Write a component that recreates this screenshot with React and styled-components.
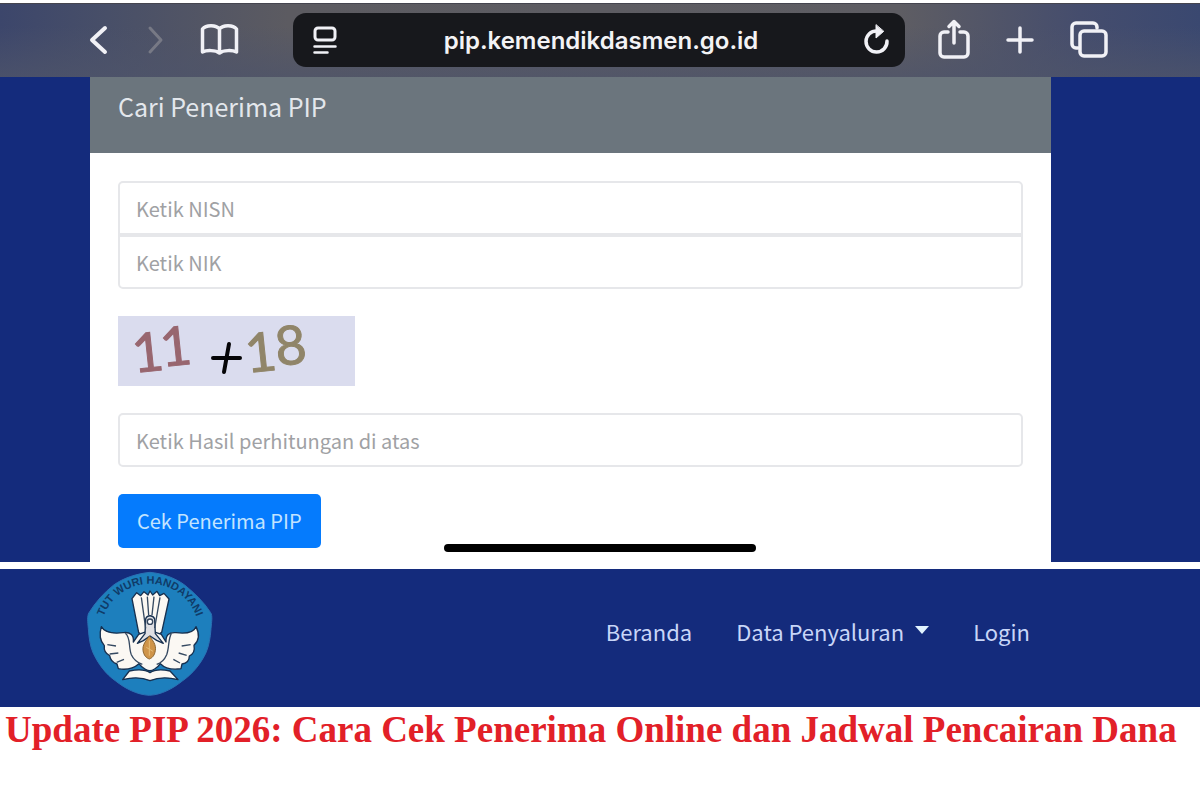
import React from "react";
import styled, { createGlobalStyle, css } from "styled-components";

const blue = "#142b7c";
const sans = `"Noto Sans CJK SC", "Noto Sans", sans-serif`;

const GlobalStyle = createGlobalStyle`
  * {
    box-sizing: border-box;
  }

  body {
    margin: 0;
    background: #fff;
    font-family: ${sans};
  }
`;

const Page = styled.main`
  display: flex;
  flex-direction: column;
  padding-top: 3px;
`;

const Toolbar = styled.header`
  display: flex;
  align-items: center;
  padding: 9px 0 10px;
  border-top: 1px solid #45454f;
  background:
    linear-gradient(180deg, rgba(78, 84, 106, 0) 30%, rgba(78, 84, 106, 0.75) 100%),
    linear-gradient(90deg, #3c466b 0%, #484f68 9%, #5c5b61 24%, #5e5d63 75%, #454d6d 90%, #3a4870 100%);
`;

const ToolGroup = styled.div`
  display: flex;
  align-items: center;
  gap: ${(props) => (props.$end ? "34px" : "36px")};
  padding: ${(props) => (props.$end ? "0 91px 0 32px" : "0 53px 0 88px")};
`;

const IconButton = styled.button`
  display: flex;
  padding: 0;
  border: 0;
  background: none;
  color: #f1f1f6;

  &:disabled {
    color: #777985;
  }
`;

const AddressBar = styled.div`
  flex: 1;
  display: flex;
  align-items: center;
  gap: 16px;
  height: 54px;
  padding: 0 14px 0 18px;
  border-radius: 13px;
  background: #17181c;
`;

const Address = styled.input`
  flex: 1;
  min-width: 0;
  padding: 2px 0 0;
  border: 0;
  background: none;
  color: #f3f3f5;
  font-family: Inter, sans-serif;
  font-size: 24px;
  font-weight: 600;
  line-height: 32px;
  text-align: center;
`;

const Content = styled.section`
  position: relative;
  padding: 0 12.4% 0 7.5%;
  background: ${blue};
`;

const Card = styled.div`
  background: #fff;
`;

const CardHeader = styled.div`
  padding: 13px 28px 31px;
  background: #6b757d;
`;

const CardTitle = styled.h1`
  margin: 0;
  color: #e3e7ec;
  font-size: 25px;
  font-weight: 400;
  line-height: 32px;
`;

const Form = styled.form`
  display: flex;
  flex-direction: column;
  align-items: flex-start;
  gap: 27px;
  padding: 28px 28px 14px;
`;

const FieldGroup = styled.div`
  width: 100%;
`;

const Field = styled.input`
  display: block;
  width: 100%;
  height: 54px;
  padding: 0 16px;
  border: 2px solid #e6e7ea;
  border-radius: ${(props) => props.$radius || "5px"};
  background: #fff;
  color: #495057;
  font-family: ${sans};
  font-size: 20px;
  line-height: 32px;

  &::placeholder {
    color: #a0a1a4;
    opacity: 1;
  }
`;

const Captcha = styled.svg`
  display: block;
  width: 237px;
  height: 70px;
  overflow: visible;
  background: #dadcee;
  font-family: Lato, sans-serif;
  font-size: 54px;
`;

const Submit = styled.button`
  height: 54px;
  padding: 0 19px;
  border: 0;
  border-radius: 5px;
  background: #057bfd;
  color: #c3e4ff;
  font-family: ${sans};
  font-size: 20px;
  line-height: 32px;
`;

const HomeIndicator = styled.div`
  position: absolute;
  bottom: 10px;
  left: 37%;
  width: 26%;
  height: 8px;
  border-radius: 4px;
  background: #000;
`;

const Navbar = styled.nav`
  display: flex;
  align-items: flex-start;
  justify-content: space-between;
  margin-top: 7px;
  padding: 2px 170px 10px 87px;
  background: ${blue};
`;

const NavLinks = styled.ul`
  display: flex;
  gap: 44px;
  margin: 0;
  padding: 44px 0 0;
  list-style: none;
`;

const NavLink = styled.a`
  display: flex;
  align-items: center;
  gap: 11px;
  color: #c8d6f8;
  font-size: 22px;
  line-height: 32px;
  text-decoration: none;

  ${(props) =>
    props.$dropdown &&
    css`
      &::after {
        content: "";
        margin-bottom: 2px;
        border-top: 8px solid #e2f4ff;
        border-right: 7px solid transparent;
        border-left: 7px solid transparent;
      }
    `}
`;

const Headline = styled.h2`
  margin: 0;
  padding: 2px 5px;
  color: #e22028;
  font-family: "Liberation Serif", serif;
  font-size: 37px;
  font-weight: 700;
  line-height: 42px;
`;

const Icon = ({ width, height, stroke = 3, children }) => (
  <svg
    width={width}
    height={height}
    viewBox={`0 0 ${width} ${height}`}
    fill="none"
    stroke="currentColor"
    strokeWidth={stroke}
    strokeLinecap="round"
    strokeLinejoin="round"
    aria-hidden="true"
  >
    {children}
  </svg>
);

const BackIcon = () => (
  <Icon width={20} height={40} stroke={4}>
    <path d="M17 8 4 20l13 12" />
  </Icon>
);

const ForwardIcon = () => (
  <Icon width={20} height={40} stroke={3}>
    <path d="M6 8 17 20 6 32" />
  </Icon>
);

const BookIcon = () => (
  <Icon width={40} height={40} stroke={3.5}>
    <path d="M19.500 32V9C16 4.500 6 4.500 2.500 9v23c4-2 13-2 17 1 4-3 13-3 17-1V9C33 4.500 23 4.500 19.500 9" />
  </Icon>
);

const ReaderIcon = () => (
  <Icon width={28} height={40}>
    <rect x="4" y="8" width="20" height="12" rx="3" />
    <path d="M3.500 26.500h21M3.500 32.500h13" strokeWidth="2.500" />
  </Icon>
);

const ReloadIcon = () => (
  <Icon width={28} height={40} stroke={3.5}>
    <path d="M24 21A10.500 10.500 0 1 1 14 11" />
    <path d="M13 5v13l7.500-6.500z" fill="currentColor" strokeWidth="1" />
  </Icon>
);

const ShareIcon = () => (
  <Icon width={34} height={44} stroke={3.5}>
    <path d="M11 14H7a4 4 0 0 0-4 4v17a4 4 0 0 0 4 4h20a4 4 0 0 0 4-4V18a4 4 0 0 0-4-4h-4" />
    <path d="M17 25V4M12 8.500 17 3.500l5 5" />
  </Icon>
);

const PlusIcon = () => (
  <Icon width={30} height={40} stroke={3.5}>
    <path d="M3 20h24M15 8v24" />
  </Icon>
);

const TabsIcon = () => (
  <Icon width={40} height={42} stroke={3.5}>
    <path d="M9 29H7a4 4 0 0 1-4-4V8a4 4 0 0 1 4-4h17a4 4 0 0 1 4 4v1" />
    <rect x="11" y="12" width="26" height="25" rx="4" />
  </Icon>
);

const Logo = () => (
  <svg width="126" height="126" viewBox="51 33 378 378" role="img" aria-label="Tut Wuri Handayani">
    <path
      d="M240 37c40 4 75 17 104 38 30 25 58 51 78 83 6 10 3 26 1 48-2 28-6 50-15 72-16 34-40 63-71 85-29 23-62 41-99 43-37-2-72-20-101-43-31-22-52-51-68-85-9-22-12-44-14-72-2-22-4-38 2-48 20-32 44-59 74-83 29-21 69-34 109-38z"
      fill="#1d7fbd"
      stroke="#2a72b4"
      strokeWidth="3"
    />
    <path id="motto" d="M98 178A148 148 0 0 1 382 178" fill="none" />
    <text fill="#103b68" fontFamily="Liberation Sans, sans-serif" fontSize="33" fontWeight="700">
      <textPath href="#motto" startOffset="50%" textAnchor="middle">
        TUT WURI HANDAYANI
      </textPath>
    </text>
    <g fill="#fbf8f3" stroke="#17304f" strokeWidth="4" strokeLinejoin="round">
      <path d="M206 218 186 116l14-18 12 9 10-12 12 10 6-12 8 12 13-11 8 13 13-7 15 17-22 100-24 16h-22z" />
      <path d="M94 200c10 18 32 22 66 18 22-3 32 9 30 28l16-23 34-12 34 12 14 23c-1-20 8-30 30-28 34 4 54-2 60-18 12 24 7 44-6 56 3 15-2 26-14 32 0 14-8 22-22 24l-3 14c-31 5-50-3-62-15-10 15-25 21-31 21s-23-6-33-21c-15 13-36 20-62 15l-4-14c-14-4-20-12-22-25-12-6-18-16-16-30-12-13-16-33-9-57z" />
      <path d="M158 359l20-26c25-5 49-4 62 5 13-9 36-10 60-5l24 26c-30-8-58-8-84 3-25-11-52-11-82-3z" />
      <path d="M202 250l23-29 2-44c4-13 22-13 27 0l2 44 24 29-20-9-20-13-20 14z" fill="#dfdfe3" />
    </g>
    <path
      d="M214 112l13 93M232 110l4 55M252 110l-6 55M270 112l-16 92M166 220c17 13 9 42 18 64 8 17 19 24 33 29M304 220c-10 19-6 43-14 64-7 16-17 25-30 29M112 254l26 4M119 282l26-3M140 307l22-9M362 254l-27 4M350 286l-24-7M330 309l-20-11"
      fill="none"
      stroke="#354961"
      strokeWidth="4"
    />
    <path
      d="M238 228c10 13 21 26 18 43-2 16-10 23-18 26-9-3-17-11-19-26-2-17 9-29 19-43z"
      fill="#cf9449"
      stroke="#8b642f"
      strokeWidth="3"
    />
    <path d="M238 241v46M229 262l20 12" stroke="#e6bd78" strokeWidth="3" />
    <circle cx="240" cy="185" r="8" fill="#fff" stroke="#35465d" strokeWidth="4" />
  </svg>
);

const links = [
  { label: "Beranda" },
  { label: "Data Penyaluran", dropdown: true },
  { label: "Login" },
];

const App = () => {
  return (
    <Page>
      <GlobalStyle />
      <Toolbar>
        <ToolGroup>
          <IconButton aria-label="Kembali">
            <BackIcon />
          </IconButton>
          <IconButton aria-label="Maju" disabled>
            <ForwardIcon />
          </IconButton>
          <IconButton aria-label="Bookmark">
            <BookIcon />
          </IconButton>
        </ToolGroup>
        <AddressBar>
          <IconButton aria-label="Tampilan">
            <ReaderIcon />
          </IconButton>
          <Address aria-label="Alamat" defaultValue="pip.kemendikdasmen.go.id" />
          <IconButton aria-label="Muat ulang">
            <ReloadIcon />
          </IconButton>
        </AddressBar>
        <ToolGroup $end>
          <IconButton aria-label="Bagikan">
            <ShareIcon />
          </IconButton>
          <IconButton aria-label="Tab baru">
            <PlusIcon />
          </IconButton>
          <IconButton aria-label="Semua tab">
            <TabsIcon />
          </IconButton>
        </ToolGroup>
      </Toolbar>

      <Content>
        <Card>
          <CardHeader>
            <CardTitle>Cari Penerima PIP</CardTitle>
          </CardHeader>
          <Form onSubmit={(event) => event.preventDefault()}>
            <FieldGroup>
              <Field aria-label="NISN" placeholder="Ketik NISN" $radius="5px 5px 0 0" />
              <Field aria-label="NIK" placeholder="Ketik NIK" $radius="0 0 5px 5px" />
            </FieldGroup>
            <Captcha viewBox="0 0 237 70">
              <text x="16 44" y="57 51" rotate="-6" fill="#98666f" stroke="#98666f">
                11
              </text>
              <path d="M95 42h27M111 28l-5 28" stroke="#050507" strokeWidth="4" strokeLinecap="round" />
              <text x="129 159" y="57 50" rotate="-6" fill="#908569" stroke="#908569">
                18
              </text>
            </Captcha>
            <Field aria-label="Hasil perhitungan" placeholder="Ketik Hasil perhitungan di atas" />
            <Submit type="submit">Cek Penerima PIP</Submit>
          </Form>
        </Card>
        <HomeIndicator />
      </Content>

      <Navbar>
        <Logo />
        <NavLinks>
          {links.map((link) => (
            <li key={link.label}>
              <NavLink href="#" $dropdown={link.dropdown}>
                {link.label}
              </NavLink>
            </li>
          ))}
        </NavLinks>
      </Navbar>

      <Headline>Update PIP 2026: Cara Cek Penerima Online dan Jadwal Pencairan Dana</Headline>
    </Page>
  );
};

export default App;
